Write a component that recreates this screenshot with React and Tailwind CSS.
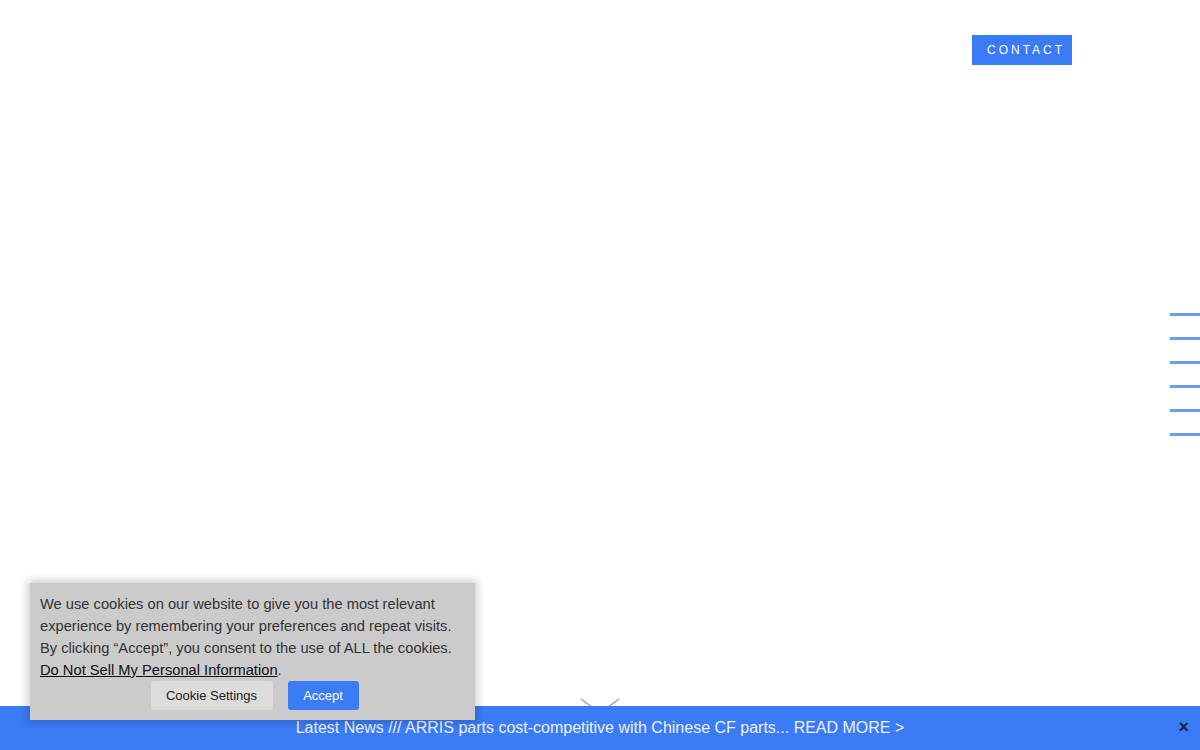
export default function App() {
  return (
    <div className="relative h-[750px] w-full overflow-hidden bg-white font-['Liberation_Sans',Arial,sans-serif]">
      {/* Header */}
      <div className="flex justify-end pt-[35px] pr-[128px]">
        <a
          href="#"
          className="flex h-[30px] w-[100px] items-center bg-[#3b7bf6] pl-[15px] text-[12px] tracking-[3px] text-white"
        >
          CONTACT
        </a>
      </div>

      {/* Side nav lines */}
      <div className="absolute right-0 top-[313px] flex flex-col gap-[21px]">
        {[0, 1, 2, 3, 4, 5].map((i) => (
          <span key={i} className="block h-[3px] w-[30px] bg-[#6b9be9]" />
        ))}
      </div>

      {/* Scroll down chevron */}
      <svg
        className="absolute left-[579px] top-[697px]"
        width="42"
        height="20"
        viewBox="0 0 42 20"
        fill="none"
      >
        <path d="M2 2 L21 16 L40 2" stroke="#9a9a9a" strokeWidth="1.3" />
      </svg>

      {/* News bar */}
      <div className="absolute bottom-0 left-0 right-0 z-10 flex h-[44px] items-center justify-center bg-[#3b7bf6]">
        <span className="text-[16px] text-[#eef2fd]">
          Latest News /// ARRIS parts cost-competitive with Chinese CF parts... READ MORE &gt;
        </span>
        <button className="absolute right-[11px] top-[12px] text-[18px] font-bold leading-none text-[#1a2440]">
          ×
        </button>
      </div>

      {/* Cookie banner */}
      <div className="absolute left-[30px] top-[583px] z-20 w-[445px] bg-[#cbcbcb] px-[10px] pt-[10px] pb-[10px] text-[14.7px] leading-[22px] text-[#333] shadow-[0_0_8px_3px_rgba(0,0,0,0.18)]">
        <p>
          We use cookies on our website to give you the most relevant experience by remembering your
          preferences and repeat visits. By clicking “Accept”, you consent to the use of ALL the
          cookies.{" "}
          <a href="#" className="text-[#111] underline">
            Do Not Sell My Personal Information
          </a>
          .
        </p>
        <div className="flex justify-center gap-[15px] pl-[4px]">
          <button className="h-[29px] w-[122px] rounded-[3px] bg-[#dcdcdc] text-[13px] text-[#222]">
            Cookie Settings
          </button>
          <button className="h-[29px] w-[71px] rounded-[3px] bg-[#3b7bf6] text-[13px] text-white">
            Accept
          </button>
        </div>
      </div>
    </div>
  );
}
